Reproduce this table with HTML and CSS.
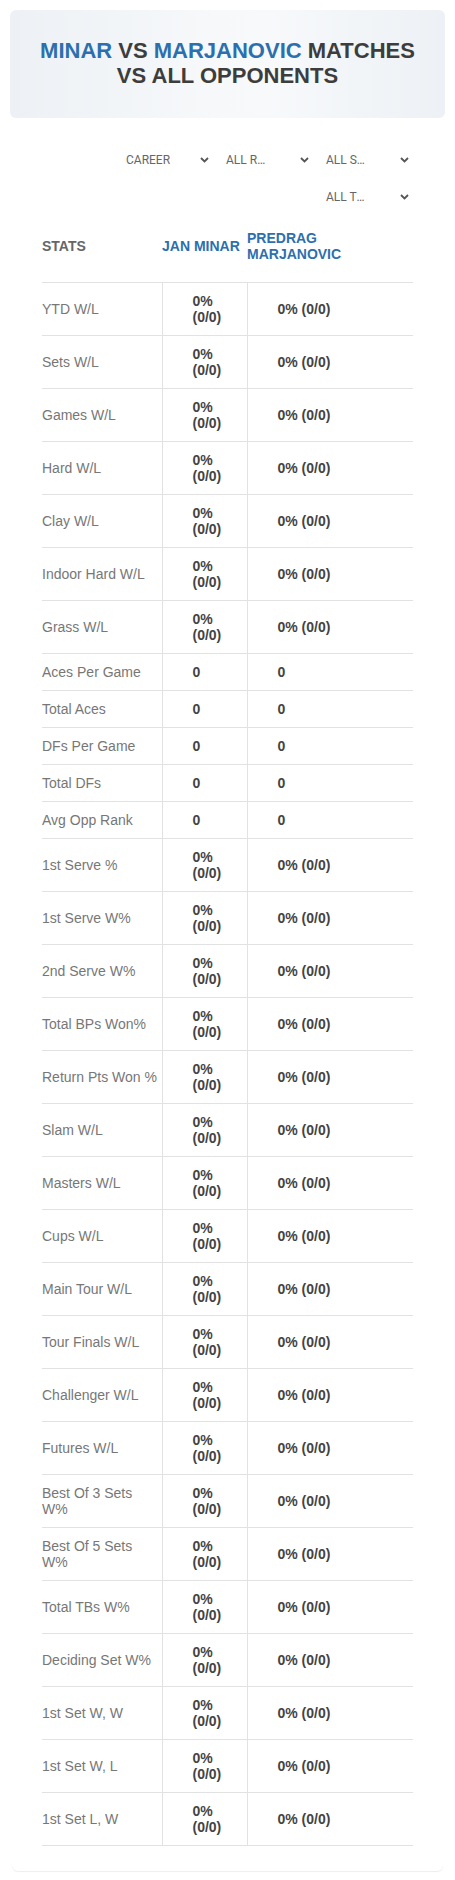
FILE: index.html
```html
<!DOCTYPE html>
<html lang="en">
<head>
    <meta charset="UTF-8">
    <meta name="viewport" content="width=device-width, initial-scale=1.0">
    <title>Minar vs Marjanovic - Stats</title>
    <link rel="stylesheet" href="styles.css">
</head>
<body>
    <header class="title-box">
        <h1><span class="blue">MINAR</span> VS <span class="blue">MARJANOVIC</span> MATCHES VS ALL OPPONENTS</h1>
    </header>
    <main class="card">
        <div class="filters">
            <div class="select"><span class="select-text">CAREER</span><svg class="chev" width="9" height="6" viewBox="0 0 9 6"><path d="M1 1l3.5 3.5L8 1" fill="none" stroke="#555" stroke-width="1.8"/></svg></div>
            <div class="select"><span class="select-text">ALL ROUNDS</span><svg class="chev" width="9" height="6" viewBox="0 0 9 6"><path d="M1 1l3.5 3.5L8 1" fill="none" stroke="#555" stroke-width="1.8"/></svg></div>
            <div class="select"><span class="select-text">ALL SURFACES</span><svg class="chev" width="9" height="6" viewBox="0 0 9 6"><path d="M1 1l3.5 3.5L8 1" fill="none" stroke="#555" stroke-width="1.8"/></svg></div>
            <div class="select"><span class="select-text">ALL TOURNAMENTS</span><svg class="chev" width="9" height="6" viewBox="0 0 9 6"><path d="M1 1l3.5 3.5L8 1" fill="none" stroke="#555" stroke-width="1.8"/></svg></div>
        </div>
        <table class="stats">
            <colgroup>
                <col class="c-label">
                <col class="c-p1">
                <col class="c-p2">
            </colgroup>
            <thead>
                <tr>
                    <th class="head-label">STATS</th>
                    <th class="player">JAN MINAR</th>
                    <th class="player">PREDRAG<br>MARJANOVIC</th>
                </tr>
            </thead>
            <tbody id="stats-body"></tbody>
        </table>
    </main>
    <script>
        const rows = [
            ['YTD W/L', '0% (0/0)'],
            ['Sets W/L', '0% (0/0)'],
            ['Games W/L', '0% (0/0)'],
            ['Hard W/L', '0% (0/0)'],
            ['Clay W/L', '0% (0/0)'],
            ['Indoor Hard W/L', '0% (0/0)'],
            ['Grass W/L', '0% (0/0)'],
            ['Aces Per Game', '0'],
            ['Total Aces', '0'],
            ['DFs Per Game', '0'],
            ['Total DFs', '0'],
            ['Avg Opp Rank', '0'],
            ['1st Serve %', '0% (0/0)'],
            ['1st Serve W%', '0% (0/0)'],
            ['2nd Serve W%', '0% (0/0)'],
            ['Total BPs Won%', '0% (0/0)'],
            ['Return Pts Won %', '0% (0/0)'],
            ['Slam W/L', '0% (0/0)'],
            ['Masters W/L', '0% (0/0)'],
            ['Cups W/L', '0% (0/0)'],
            ['Main Tour W/L', '0% (0/0)'],
            ['Tour Finals W/L', '0% (0/0)'],
            ['Challenger W/L', '0% (0/0)'],
            ['Futures W/L', '0% (0/0)'],
            ['Best Of 3 Sets W%', '0% (0/0)'],
            ['Best Of 5 Sets W%', '0% (0/0)'],
            ['Total TBs W%', '0% (0/0)'],
            ['Deciding Set W%', '0% (0/0)'],
            ['1st Set W, W', '0% (0/0)'],
            ['1st Set W, L', '0% (0/0)'],
            ['1st Set L, W', '0% (0/0)']
        ];

        const body = document.getElementById('stats-body');
        rows.forEach(row => {
            const tr = document.createElement('tr');
            tr.innerHTML = `
                <td class="label">${row[0]}</td>
                <td class="value">${row[1]}</td>
                <td class="value">${row[1]}</td>
            `;
            body.appendChild(tr);
        });
    </script>
</body>
</html>
```

FILE: styles.css
```css
body, h1, table {
    margin: 0;
    padding: 0;
}

body {
    font-family: 'Liberation Sans', Arial, sans-serif;
    color: #3d3d3d;
    background: #fff;
}

.title-box {
    margin: 10px 10px 0;
    padding: 28px 20px 30px;
    border-radius: 6px;
    background: linear-gradient(90deg, #edf1f5 0%, #f6f8fa 45%, #f7f9fb 60%, #edf1f5 100%);
}

.title-box h1 {
    font-size: 22px;
    line-height: 25px;
    font-weight: bold;
    text-align: center;
    color: #3d3d3d;
}

.blue {
    color: #2c6fae;
}

.card {
    display: block;
    margin: 0 12px 10px;
    padding: 29px 30px 25px;
    border-radius: 0 0 6px 6px;
    box-shadow: 0 1px 1px rgba(0, 0, 0, 0.07);
}

.filters {
    display: flex;
    flex-wrap: wrap;
    justify-content: flex-end;
    column-gap: 10px;
    row-gap: 11px;
}

.select {
    width: 90px;
    height: 26px;
    box-sizing: border-box;
    padding: 0 4px 0 3px;
    display: flex;
    align-items: center;
    justify-content: space-between;
    font-family: Roboto, 'Noto Sans', sans-serif;
    font-size: 12px;
    color: #666;
}

.select-text {
    max-width: 46px;
    overflow: hidden;
    white-space: nowrap;
    text-overflow: ellipsis;
}

.chev {
    display: block;
}

.stats {
    width: 371px;
    table-layout: fixed;
    border-collapse: collapse;
    font-size: 14px;
    line-height: 16px;
}

.c-label {
    width: 120px;
}

.c-p1 {
    width: 85px;
}

.c-p2 {
    width: 166px;
}

.stats th {
    padding: 20px 4px 20px 0;
    text-align: left;
    vertical-align: middle;
    font-weight: bold;
    border-bottom: 1px solid #e2e2e2;
}

.stats .head-label {
    color: #666;
}

.stats .player {
    color: #2c6fae;
}

.stats td {
    padding: 10px 30px;
    border-bottom: 1px solid #e2e2e2;
    vertical-align: middle;
}

.stats td.label {
    padding: 10px 4px 10px 0;
    color: #777;
}

.stats td.value {
    border-left: 1px solid #e2e2e2;
    font-weight: bold;
    color: #444;
}
```
